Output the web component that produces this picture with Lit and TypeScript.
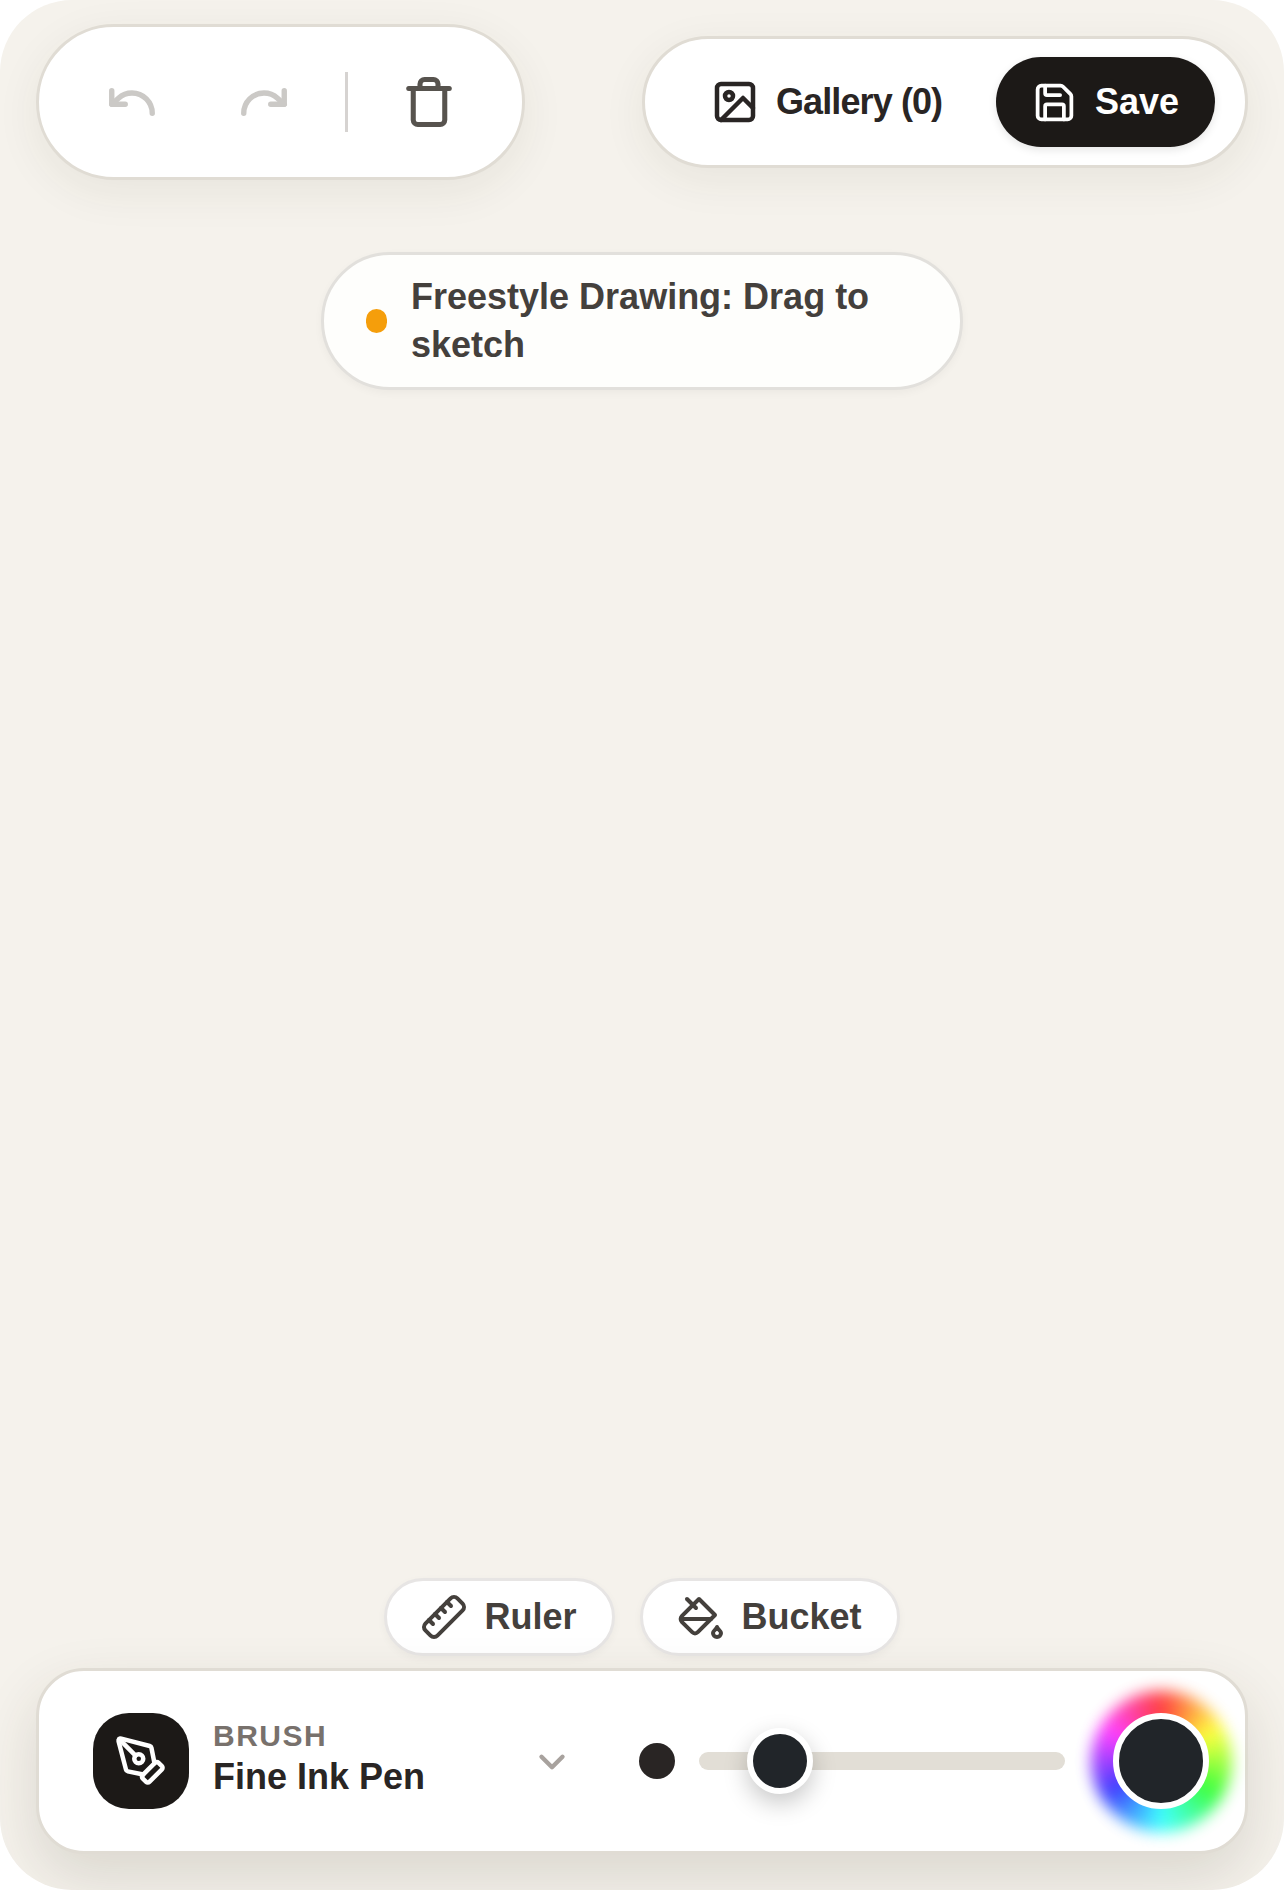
import { LitElement, html, css, svg } from "lit";
import { customElement, property } from "lit/decorators.js";

const icon = (size: number, body: unknown, stroke = 2, cls = "") => html`
  <svg class=${cls} width=${size} height=${size} viewBox="0 0 24 24" fill="none" stroke="currentColor"
    stroke-width=${stroke} stroke-linecap="round" stroke-linejoin="round">${body}</svg>
`;

const undoIcon = svg`<path d="M3 7v6h6"/><path d="M21 17a9 9 0 0 0-9-9 9 9 0 0 0-6 2.3L3 13"/>`;
const redoIcon = svg`<path d="M21 7v6h-6"/><path d="M3 17a9 9 0 0 1 9-9 9 9 0 0 1 6 2.3l3 2.7"/>`;
const trashIcon = svg`<path d="M3 6h18"/><path d="M19 6v14c0 1-1 2-2 2H7c-1 0-2-1-2-2V6"/><path d="M8 6V4c0-1 1-2 2-2h4c1 0 2 1 2 2v2"/>`;
const imageIcon = svg`<rect x="3" y="3" width="18" height="18" rx="2" ry="2"/><circle cx="9" cy="9" r="2"/><path d="m21 15-5-5L5 21"/>`;
const saveIcon = svg`<path d="M15.2 3a2 2 0 0 1 1.4.6l3.8 3.8a2 2 0 0 1 .6 1.4V19a2 2 0 0 1-2 2H5a2 2 0 0 1-2-2V5a2 2 0 0 1 2-2z"/><path d="M17 21v-7a1 1 0 0 0-1-1H8a1 1 0 0 0-1 1v7"/><path d="M7 3v4a1 1 0 0 0 1 1h7"/>`;
const rulerIcon = svg`<g transform="matrix(-1 0 0 1 24 0)"><path d="M21.3 15.3a2.4 2.4 0 0 1 0 3.4l-2.6 2.6a2.4 2.4 0 0 1-3.4 0L2.7 8.7a2.41 2.41 0 0 1 0-3.4l2.6-2.6a2.41 2.41 0 0 1 3.4 0Z"/><path d="m14.5 12.5 2-2"/><path d="m11.5 9.5 2-2"/><path d="m8.5 6.5 2-2"/><path d="m17.5 15.5 2-2"/></g>`;
const bucketIcon = svg`<path d="m19 11-8-8-8.6 8.6a2 2 0 0 0 0 2.8l5.2 5.2c.8.8 2 .8 2.8 0L19 11Z"/><path d="m5 3 4.5 4.5"/><path d="M2 13h15"/><path d="M22 20a2 2 0 1 1-4 0c0-1.2 1.7-1.8 2-3 .3 1.2 2 1.8 2 3Z"/>`;
const penIcon = svg`<path d="M15.707 21.293a1 1 0 0 1-1.414 0l-1.586-1.586a1 1 0 0 1 0-1.414l5.586-5.586a1 1 0 0 1 1.414 0l1.586 1.586a1 1 0 0 1 0 1.414z"/><path d="m18 13-1.375-6.874a1 1 0 0 0-.746-.776L3.235 2.028a1 1 0 0 0-1.207 1.207L5.35 15.879a1 1 0 0 0 .776.746L13 18"/><path d="m2.3 2.3 7.286 7.286"/><circle cx="11" cy="11" r="2"/>`;
const chevronIcon = svg`<path d="m6 9 6 6 6-6"/>`;

@customElement("app-root")
export class AppRoot extends LitElement {
  @property({ type: Number }) brushSize = 0.222;

  static styles = css`
    :host {
      display: block;
      background: #fff;
      font-family: "Liberation Sans", Arial, sans-serif;
      font-weight: 700;
    }
    .frame {
      height: 1890px;
      box-sizing: border-box;
      border-radius: 72px;
      background: #f5f2ec;
      overflow: hidden;
      display: flex;
      flex-direction: column;
      padding: 24px 36px 36px;
    }
    .top {
      display: flex;
      justify-content: space-between;
      align-items: flex-start;
    }
    .pill {
      box-sizing: border-box;
      display: flex;
      align-items: center;
      background: #fff;
      border: 3px solid #e0dcd4;
      border-radius: 999px;
      box-shadow: 0 12px 45px rgba(60, 50, 30, 0.07);
    }
    .history {
      width: 489px;
      height: 156px;
      padding: 0 0 0 27px;
    }
    .round {
      width: 132px;
      height: 132px;
      display: flex;
      align-items: center;
      justify-content: center;
      color: #57534e;
    }
    .round.off {
      color: #cbc9c6;
    }
    .sep {
      width: 3px;
      height: 60px;
      margin: 0 15px;
      background: #d6d3d1;
    }
    .actions {
      width: 606px;
      height: 132px;
      margin-top: 12px;
      padding: 0 30px 0 66px;
      font-size: 36px;
      justify-content: space-between;
    }
    .gallery,
    .save {
      display: flex;
      align-items: center;
    }
    .gallery {
      gap: 17px;
      letter-spacing: -0.9px;
      color: #292524;
    }
    .save {
      gap: 18px;
      height: 90px;
      padding: 0 36px;
      border-radius: 45px;
      background: #1c1917;
      color: #fff;
      box-shadow: 0 3px 9px rgba(0, 0, 0, 0.1);
    }
    .hint {
      align-self: center;
      width: 642px;
      margin-top: 72px;
      padding: 18px 42px;
      gap: 24px;
      font-size: 36px;
      line-height: 48px;
      color: #44403c;
      background: #fefefc;
      border-color: #e2e0dc;
      box-shadow: 0 3px 9px rgba(0, 0, 0, 0.04);
    }
    .hint-dot {
      width: 21px;
      height: 24px;
      border-radius: 999px;
      background: #f59e0b;
      flex: none;
    }
    .tools {
      margin-top: auto;
      display: flex;
      justify-content: center;
      gap: 25px;
    }
    .tool {
      height: 78px;
      padding: 0 35px 0 34px;
      gap: 16px;
      font-size: 36px;
      color: #44403c;
      border-color: #e7e5e4;
      box-shadow: 0 3px 9px rgba(0, 0, 0, 0.04);
    }
    .tool.ruler {
      padding: 0 36px 0 33px;
    }
    .panel {
      box-sizing: border-box;
      height: 186px;
      margin-top: 12px;
      padding: 0 36px 0 54px;
      display: flex;
      align-items: center;
      background: #fff;
      border: 3px solid #e0dcd4;
      border-radius: 48px;
      box-shadow: 0 24px 60px rgba(60, 50, 30, 0.14);
    }
    .brush {
      width: 480px;
      margin-right: 66px;
      display: flex;
      align-items: center;
      flex: none;
    }
    .brush-icon {
      width: 96px;
      height: 96px;
      border-radius: 36px;
      background: #1c1917;
      color: #fff;
      display: flex;
      align-items: center;
      justify-content: center;
      flex: none;
    }
    .brush-text {
      flex: 1;
      margin: 0 0 2px 24px;
    }
    .brush-label {
      font-size: 30px;
      line-height: 32px;
      margin-bottom: 1px;
      letter-spacing: 1.5px;
      color: #78716c;
    }
    .brush-name {
      font-size: 36px;
      line-height: 48px;
      color: #292524;
    }
    .chevron {
      color: #a8a29e;
      display: block;
      margin-top: 2px;
    }
    .size-dot {
      width: 36px;
      height: 36px;
      border-radius: 50%;
      background: #292524;
      flex: none;
    }
    .track {
      flex: 1;
      height: 18px;
      margin: 0 48px 0 24px;
      border-radius: 9px;
      background: #e2ded6;
      position: relative;
    }
    .thumb {
      position: absolute;
      top: -24px;
      width: 66px;
      height: 66px;
      margin-left: -33px;
      box-sizing: border-box;
      border: 6px solid #fff;
      border-radius: 50%;
      background: #212529;
      box-shadow: 0 9px 24px rgba(0, 0, 0, 0.22);
    }
    .picker {
      width: 96px;
      height: 96px;
      display: grid;
      grid-template: 96px / 96px;
      place-items: center;
      flex: none;
    }
    .wheel,
    .swatch {
      grid-area: 1 / 1;
    }
    .wheel {
      width: 141px;
      height: 141px;
      border-radius: 50%;
      background: conic-gradient(#f00, #ff0, #0f0, #0ff, #00f, #f0f, #f00);
      filter: blur(7.5px);
      opacity: 0.75;
    }
    .swatch {
      position: relative;
      width: 96px;
      height: 96px;
      box-sizing: border-box;
      border: 6px solid #fff;
      border-radius: 50%;
      background: #212529;
    }
  `;

  render() {
    return html`
      <div class="frame">
        <div class="top">
          <div class="pill history">
            <div class="round off">${icon(54, undoIcon, 2.4)}</div>
            <div class="round off">${icon(54, redoIcon, 2.4)}</div>
            <div class="sep"></div>
            <div class="round">${icon(54, trashIcon, 2.25)}</div>
          </div>
          <div class="pill actions">
            <div class="gallery">${icon(48, imageIcon, 2.25)}<span>Gallery (0)</span></div>
            <div class="save">${icon(45, saveIcon)}<span>Save</span></div>
          </div>
        </div>

        <div class="pill hint">
          <div class="hint-dot"></div>
          <span>Freestyle Drawing: Drag to sketch</span>
        </div>

        <div class="tools">
          <div class="pill tool ruler">${icon(48, rulerIcon)}<span>Ruler</span></div>
          <div class="pill tool">${icon(48, bucketIcon)}<span>Bucket</span></div>
        </div>

        <div class="panel">
          <div class="brush">
            <div class="brush-icon">${icon(54, penIcon)}</div>
            <div class="brush-text">
              <div class="brush-label">BRUSH</div>
              <div class="brush-name">Fine Ink Pen</div>
            </div>
            ${icon(42, chevronIcon, 2.5, "chevron")}
          </div>
          <div class="size-dot"></div>
          <div class="track">
            <div class="thumb" style="left: ${this.brushSize * 100}%"></div>
          </div>
          <div class="picker">
            <div class="wheel"></div>
            <div class="swatch"></div>
          </div>
        </div>
      </div>
    `;
  }
}
